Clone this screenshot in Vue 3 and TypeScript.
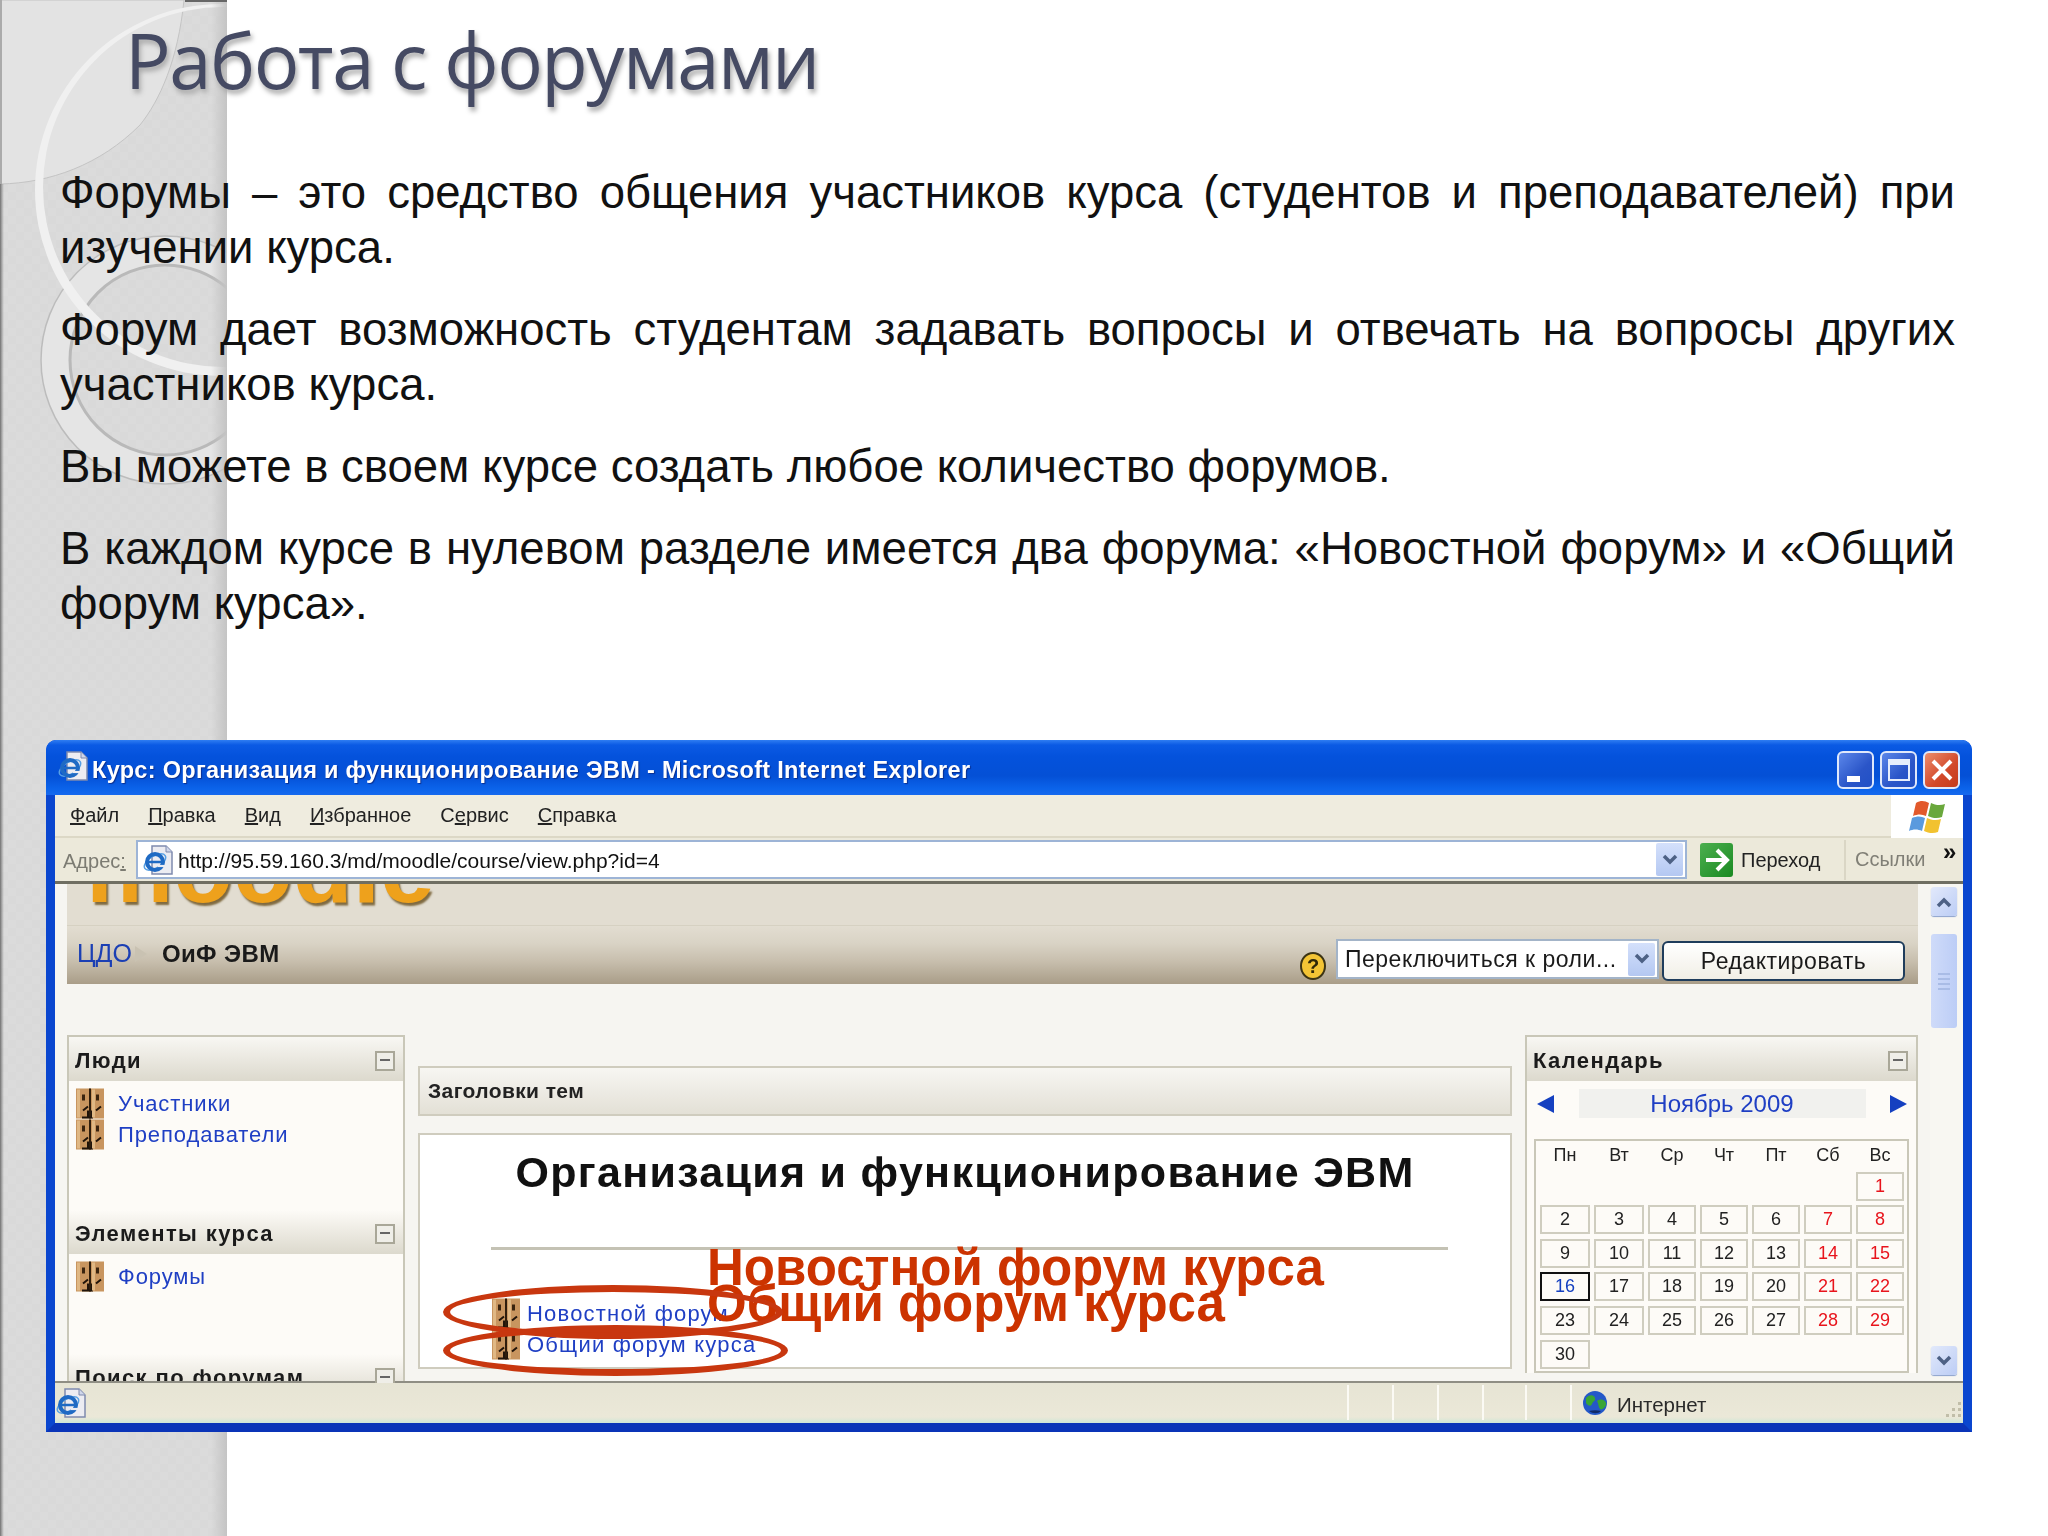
<script setup lang="ts">
const paragraphs = [
  "Форумы – это средство общения участников курса (студентов и преподавателей) при изучении курса.",
  "Форум дает возможность студентам задавать вопросы и отвечать на вопросы других участников курса.",
  "Вы можете в своем курсе создать любое количество форумов.",
  "В каждом курсе в нулевом разделе имеется два форума: «Новостной форум» и «Общий форум курса».",
];

const menu = [
  { pre: "", key: "Ф", post: "айл" },
  { pre: "", key: "П", post: "равка" },
  { pre: "", key: "В", post: "ид" },
  { pre: "", key: "И", post: "збранное" },
  { pre: "С", key: "е", post: "рвис" },
  { pre: "", key: "С", post: "правка" },
];

const weekdays = ["Пн", "Вт", "Ср", "Чт", "Пт", "Сб", "Вс"];
const blanks = 6;
const days = Array.from({ length: 30 }, (_, i) => i + 1);
const isWeekend = (day: number) => {
  const col = (day + blanks - 1) % 7;
  return col >= 5;
};
</script>

<template>
  <div class="slide">
    <svg class="band" width="227" height="1536" viewBox="0 0 227 1536">
      <defs>
        <linearGradient id="edge" x1="0" y1="0" x2="1" y2="0">
          <stop offset="0" stop-color="#6f6f6f" />
          <stop offset="1" stop-color="#8c8c8c" stop-opacity="0" />
        </linearGradient>
        <linearGradient id="edgeRight" x1="0" y1="0" x2="1" y2="0">
          <stop offset="0" stop-color="#c4c4c4" stop-opacity="0" />
          <stop offset="1" stop-color="#c4c4c4" />
        </linearGradient>
        <pattern id="weave" width="16" height="16" patternUnits="userSpaceOnUse">
          <rect width="8" height="8" fill="#e0e0e0" />
          <rect x="8" y="8" width="8" height="8" fill="#e0e0e0" />
        </pattern>
      </defs>
      <rect width="227" height="1536" fill="#d9d9d9" />
      <rect width="227" height="1536" fill="url(#weave)" opacity="0.25" />
      <path d="M0 0H184C178 60 160 100 140 125 100 165 50 183 0 184z" fill="#e3e3e3" stroke="#c4c4c4" stroke-width="1" />
      <rect y="0" width="2" height="184" fill="#ababab" />
      <circle cx="165" cy="360" r="110" fill="none" stroke="#e5e5e5" stroke-width="29" />
      <circle cx="165" cy="360" r="124" fill="none" stroke="#bcbcbc" stroke-width="1.5" />
      <circle cx="165" cy="360" r="95" fill="none" stroke="#b9b9b9" stroke-width="3" />
      <path
        d="M35 190a186 186 0 1 0 372 0a186 186 0 1 0-372 0zM43 187a180 180 0 1 0 360 0a180 180 0 1 0-360 0z"
        fill="#f0f0f0"
        fill-rule="evenodd"
      />
      <rect width="4" height="1536" y="184" fill="url(#edge)" />
      <rect x="211" width="16" height="1536" fill="url(#edgeRight)" />
      <rect x="185" width="42" height="2" fill="#666" />
      <symbol id="door" viewBox="0 0 28 30">
        <rect width="28" height="30" fill="#c8955f" />
        <rect x="13" width="2" height="30" fill="#2e1d0c" />
        <rect x="6" y="6" width="3" height="6" fill="#3a240f" />
        <rect x="20" y="6" width="3" height="6" fill="#3a240f" />
        <path d="M12 18 7 22M12 22v7H6M25 18l-5 4M16 22v7h-3" fill="none" stroke="#20140a" stroke-width="2" />
        <rect x="1" y="1" width="3" height="28" fill="#e0b884" />
        <rect x="16" y="1" width="3" height="28" fill="#e0b884" />
      </symbol>
      <symbol id="ie" viewBox="0 0 30 30">
        <path d="M9 1h14l6 6v22H9z" fill="#ececf2" stroke="#7f8aae" stroke-width="1.5" />
        <path d="M23 1v6h6" fill="#cfd6ea" stroke="#7f8aae" />
        <ellipse cx="12" cy="17" rx="12" ry="6" transform="rotate(-32 12 17)" fill="none" stroke="#58a0e4" stroke-width="1.5" />
        <circle cx="12" cy="17" r="8" fill="none" stroke="#1f6ac4" stroke-width="4" />
        <path d="M5 17h14" stroke="#1f6ac4" stroke-width="2.5" />
        <path d="M15 21h7" stroke="#ececf2" stroke-width="2.2" />
      </symbol>
    </svg>

    <div class="text">
      <h1 class="title">Работа с форумами</h1>
      <p v-for="p in paragraphs" :key="p" class="para">{{ p }}</p>
    </div>

    <div class="window">
      <div class="titlebar">
        <svg class="title-icon" width="30" height="30"><use href="#ie" /></svg>
        <span class="title-text">Курс: Организация и функционирование ЭВМ - Microsoft Internet Explorer</span>
        <div class="controls">
          <div class="ctl"><span class="min"></span></div>
          <div class="ctl"><span class="max"></span></div>
          <div class="ctl close">
            <svg width="24" height="24" viewBox="0 0 24 24"><path d="M3 3l18 18M21 3 3 21" stroke="#fff" stroke-width="4" /></svg>
          </div>
        </div>
      </div>

      <div class="menubar">
        <div class="menu-items">
          <span v-for="m in menu" :key="m.post">{{ m.pre }}<u>{{ m.key }}</u>{{ m.post }}</span>
        </div>
        <div class="flag">
          <svg width="38" height="34" viewBox="0 0 38 34">
            <path d="M8 3c5-3 9-2 13 0l-3 13c-4-2-8-2-13 0z" fill="#e2592b" />
            <path d="M23 3c4 2 9 3 14 1l-3 13c-5 2-10 1-14-1z" fill="#6aa83c" />
            <path d="M4 18c5-2 9-2 13 0l-3 13c-4-2-9-2-13 0z" fill="#5a9ade" />
            <path d="M19 18c4 2 9 3 14 1l-3 13c-5 2-10 1-14-1z" fill="#f2c230" />
          </svg>
        </div>
      </div>

      <div class="addressbar">
        <span class="addr-label">Адрес<u>:</u></span>
        <div class="addr-box">
          <svg width="30" height="30"><use href="#ie" /></svg>
          <span class="addr-url">http://95.59.160.3/md/moodle/course/view.php?id=4</span>
          <span class="combo-btn">
            <svg width="16" height="12" viewBox="0 0 16 12"><path d="M2 2l6 6 6-6" fill="none" stroke="#4d6185" stroke-width="3.5" /></svg>
          </span>
        </div>
        <span class="go-icon">
          <svg width="26" height="26" viewBox="0 0 26 26"><path d="M2 13h20M13 3l10 10-10 10" fill="none" stroke="#fff" stroke-width="4" /></svg>
        </span>
        <span class="go-text">Переход</span>
        <span class="links">Ссылки</span>
        <span class="more">»</span>
      </div>

      <div class="viewport">
        <div class="page">
          <div class="logo-strip"><span class="logo">moodle</span></div>
          <div class="navbar">
            <span class="crumb">ЦДО</span>
            <span class="crumb-arrow"></span>
            <span class="course">ОиФ ЭВМ</span>
            <div class="nav-right">
              <span class="help">?</span>
              <div class="role-select">
                <span>Переключиться к роли...</span>
                <span class="combo-btn">
                  <svg width="16" height="12" viewBox="0 0 16 12"><path d="M2 2l6 6 6-6" fill="none" stroke="#4d6185" stroke-width="3.5" /></svg>
                </span>
              </div>
              <div class="edit-btn">Редактировать</div>
            </div>
          </div>

          <div class="columns">
            <div class="col-left">
              <div class="block-head"><span>Люди</span><i class="toggle"></i></div>
              <div class="block-body people">
                <div class="row"><svg width="28" height="31"><use href="#door" /></svg><a>Участники</a></div>
                <div class="row"><svg width="28" height="31"><use href="#door" /></svg><a>Преподаватели</a></div>
              </div>
              <div class="block-head fade"><span>Элементы курса</span><i class="toggle"></i></div>
              <div class="block-body items">
                <div class="row"><svg width="28" height="31"><use href="#door" /></svg><a>Форумы</a></div>
              </div>
              <div class="block-head fade"><span>Поиск по форумам</span><i class="toggle"></i></div>
            </div>

            <div class="col-mid">
              <div class="topics-head">Заголовки тем</div>
              <div class="topics-box">
                <h2 class="course-title">Организация и функционирование ЭВМ</h2>
                <div class="rule"></div>
                <div class="forum-row"><svg width="28" height="31"><use href="#door" /></svg><a>Новостной форум</a></div>
                <div class="forum-row"><svg width="28" height="31"><use href="#door" /></svg><a>Общий форум курса</a></div>
              </div>
            </div>

            <div class="col-right">
              <div class="block-head"><span class="cal-title">Календарь</span><i class="toggle"></i></div>
              <div class="cal-body">
                <div class="month-row">
                  <span class="arrow left"></span>
                  <span class="month">Ноябрь 2009</span>
                  <span class="arrow right"></span>
                </div>
                <div class="cal-grid">
                  <span v-for="w in weekdays" :key="w" class="wd">{{ w }}</span>
                  <span v-for="n in blanks" :key="'b' + n" class="blank"></span>
                  <span
                    v-for="d in days"
                    :key="d"
                    class="day"
                    :class="{ weekend: isWeekend(d), today: d === 16 }"
                  >{{ d }}</span>
                </div>
              </div>
            </div>
          </div>
        </div>

        <div class="scrollbar">
          <span class="sb-btn">
            <svg width="16" height="12" viewBox="0 0 16 12"><path d="M2 10l6-6 6 6" fill="none" stroke="#4d6185" stroke-width="3.5" /></svg>
          </span>
          <div class="sb-thumb"><i></i><i></i><i></i><i></i></div>
          <span class="sb-btn bottom">
            <svg width="16" height="12" viewBox="0 0 16 12"><path d="M2 2l6 6 6-6" fill="none" stroke="#4d6185" stroke-width="3.5" /></svg>
          </span>
        </div>
      </div>

      <div class="statusbar">
        <svg class="status-ie" width="30" height="30"><use href="#ie" /></svg>
        <div class="status-fill"></div>
        <div class="cell"></div>
        <div class="cell"></div>
        <div class="cell"></div>
        <div class="cell narrow"></div>
        <div class="cell"></div>
        <div class="cell zone">
          <svg width="24" height="24" viewBox="0 0 24 24">
            <circle cx="12" cy="12" r="12" fill="#2458c8" />
            <path d="M3 7c4-4 8-3 9 0s-2 3-3 6-4 2-6-1zM14 10c4-3 8-1 9 2s-4 8-6 6-1-5-3-8z" fill="#39a534" />
            <path d="M6 20c4 3 9 3 12 0-4-1-8-1-12 0z" fill="#102a68" />
          </svg>
          <span class="zone-text">Интернет</span>
          <svg class="grip" width="18" height="18" viewBox="0 0 18 18">
            <path d="M13 1h3v3h-3zM7 7h3v3H7zM13 7h3v3h-3zM1 13h3v3H1zM7 13h3v3H7zM13 13h3v3h-3z" fill="#c1bea9" />
          </svg>
        </div>
      </div>
    </div>

    <div class="callout first">Новостной форум курса</div>
    <div class="callout second">Общий форум курса</div>
    <div class="ring ring-a"></div>
    <div class="ring ring-b"></div>
  </div>
</template>

<style>
html,
body {
  margin: 0;
  background: #fff;
}
</style>

<style scoped>
.slide {
  position: relative;
  width: 2048px;
  height: 1536px;
  overflow: hidden;
  background: #fff;
  font-family: "Liberation Sans", sans-serif;
}
.band {
  position: absolute;
  left: 0;
  top: 0;
}
.text {
  position: relative;
  padding: 0 93px 0 60px;
}
.title {
  margin: 0 0 0 65px;
  height: 165px;
  box-sizing: border-box;
  padding-top: 10px;
  font-family: "Open Sans", sans-serif;
  font-weight: 400;
  font-size: 76px;
  line-height: 100px;
  letter-spacing: -1.5px;
  color: #454a63;
  text-shadow: 2px 4px 5px #a9a9a9;
}
.para {
  margin: 0 0 27px;
  font-size: 45.5px;
  line-height: 55px;
  text-align: justify;
  color: #111;
}

.window {
  position: relative;
  margin: 109px 76px 0 46px;
  height: 692px;
  box-sizing: border-box;
  display: flex;
  flex-direction: column;
  background: #0a4fd6;
  border: solid #0a46cf;
  border-width: 0 9px 9px;
  border-bottom-color: #0a34b8;
  border-radius: 10px 10px 0 0;
  filter: blur(0.5px);
  font-size: 21px;
  color: #222;
}
.titlebar {
  height: 55px;
  margin: 0 -9px;
  padding: 0 12px;
  display: flex;
  align-items: center;
  border-radius: 10px 10px 0 0;
  background: linear-gradient(#2f7df2 0, #0b5ae4 5px, #0452dc 30%, #0450d6 65%, #0b63ea 88%, #1669ee 100%);
}
.title-icon {
  margin: 0 4px 4px 0;
}
.title-text {
  margin-top: 5px;
  font-weight: 700;
  font-size: 23.5px;
  color: #fff;
  text-shadow: 1px 1px 1px #0a2f90;
  letter-spacing: 0.3px;
  white-space: nowrap;
}
.controls {
  margin-left: auto;
  margin-right: 0;
  margin-top: 4px;
  display: flex;
  gap: 6px;
}
.ctl {
  width: 37px;
  height: 38px;
  box-sizing: border-box;
  border: 2px solid #dfe8fb;
  border-radius: 6px;
  background: linear-gradient(135deg, #5b87ea, #2a55c8 60%, #2150c6);
  position: relative;
  display: flex;
  align-items: center;
  justify-content: center;
}
.ctl.close {
  background: linear-gradient(135deg, #ec8d6c, #d2482a 60%, #c43c1c);
}
.min {
  position: absolute;
  left: 8px;
  bottom: 5px;
  width: 13px;
  height: 6px;
  background: #fff;
}
.max {
  width: 22px;
  height: 22px;
  box-sizing: border-box;
  border: 2px solid #e6eefc;
  border-top-width: 6px;
}

.menubar {
  height: 43px;
  display: flex;
  background: #efecdf;
}
.menu-items {
  flex: 1;
  display: flex;
  align-items: center;
  gap: 29px;
  padding-left: 15px;
  font-size: 20px;
  border-bottom: 2px solid #dcd8c6;
}
.flag {
  width: 72px;
  display: flex;
  align-items: center;
  justify-content: center;
  background: #fff;
}

.addressbar {
  height: 46px;
  box-sizing: border-box;
  display: flex;
  align-items: center;
  background: #ece9da;
  border-bottom: 3px solid #6f6e62;
  white-space: nowrap;
}
.addr-label {
  margin: 3px 0 0 8px;
  width: 73px;
  font-size: 20px;
  color: #7c7b72;
}
.addr-box {
  flex: 1;
  height: 39px;
  box-sizing: border-box;
  display: flex;
  align-items: center;
  padding: 0 2px 0 5px;
  background: #fff;
  border: 2px solid #9db4d6;
}
.addr-url {
  margin: 3px 0 0 5px;
  color: #111;
}
.combo-btn {
  margin-left: auto;
  width: 27px;
  height: 33px;
  display: flex;
  align-items: center;
  justify-content: center;
  background: linear-gradient(#d4e0fb, #b4c8f2);
  border-radius: 2px;
}
.go-icon {
  margin-left: 13px;
  width: 33px;
  height: 34px;
  display: flex;
  align-items: center;
  justify-content: center;
  background: linear-gradient(135deg, #4caf4f, #1a8a22);
  border-radius: 3px;
}
.go-text {
  margin-left: 8px;
  width: 81px;
  padding-right: 22px;
  border-right: 2px solid #dad6c5;
  line-height: 40px;
  font-size: 20px;
}
.links {
  margin-left: 9px;
  width: 71px;
  font-size: 20px;
  color: #807f76;
}
.more {
  margin-left: 17px;
  width: 20px;
  align-self: flex-start;
  font-weight: 700;
  font-size: 24px;
  line-height: 28px;
  color: #111;
}

.viewport {
  flex: 1;
  min-height: 0;
  display: flex;
  background: #f6f5f1;
}
.page {
  flex: 1;
  min-width: 0;
  overflow: hidden;
  padding: 0 12px;
}
.logo-strip {
  height: 42px;
  overflow: hidden;
  background: #e2ddd1;
  border-bottom: 1px solid #d6d1c2;
  box-sizing: border-box;
}
.logo {
  display: block;
  margin: -65px 0 0 19px;
  font-weight: 700;
  font-size: 98px;
  line-height: 98px;
  color: #eea11c;
  text-shadow: 2px 3px 2px #7f6a40;
}
.navbar {
  height: 58px;
  display: flex;
  align-items: center;
  padding-left: 10px;
  background: linear-gradient(#e2ddd1 0, #d9d3c5 30%, #c8bfae 60%, #a99d88 100%);
}
.crumb {
  margin-bottom: 3px;
  font-size: 25px;
  color: #1b3fb4;
}
.crumb-arrow {
  margin: 0 0 3px 3px;
  width: 0;
  height: 0;
  border: 8px solid transparent;
  border-left: 12px solid #c9c2b2;
}
.course {
  margin: 0 0 3px 7px;
  font-size: 24px;
  font-weight: 700;
  letter-spacing: 0.4px;
  color: #1a1a1a;
}
.nav-right {
  margin-left: auto;
  margin-right: 13px;
  display: flex;
  align-items: center;
}
.help {
  width: 26px;
  height: 28px;
  margin: 22px 10px 0 0;
  display: flex;
  align-items: center;
  justify-content: center;
  box-sizing: border-box;
  border: 2px solid #3c3414;
  border-radius: 50%;
  background: #f3c435;
  font-size: 20px;
  font-weight: 700;
  color: #2f2808;
}
.role-select {
  width: 323px;
  height: 40px;
  box-sizing: border-box;
  display: flex;
  align-items: center;
  padding: 0 2px 0 7px;
  margin-top: 8px;
  background: #fff;
  border: 2px solid #a3b4c8;
  font-size: 23px;
  letter-spacing: 0.5px;
  color: #1a1a1a;
  white-space: nowrap;
}
.edit-btn {
  width: 243px;
  height: 40px;
  margin: 12px 0 0 3px;
  box-sizing: border-box;
  display: flex;
  align-items: center;
  justify-content: center;
  background: linear-gradient(#fff, #f1efe6);
  border: 2px solid #1f3d5c;
  border-radius: 6px;
  font-size: 23px;
  letter-spacing: 0.5px;
  color: #1a1a1a;
}

.columns {
  display: flex;
  gap: 13px;
  margin-top: 51px;
  align-items: flex-start;
}
.col-left {
  width: 338px;
  flex: none;
  box-sizing: border-box;
  border: solid #c9c7b8;
  border-width: 2px 2px 0;
  background: #fdfbf7;
}
.col-mid {
  flex: 1;
  min-width: 0;
  padding-top: 31px;
}
.col-right {
  width: 393px;
  flex: none;
  box-sizing: border-box;
  border: solid #c9c7b8;
  border-width: 2px 2px 0;
  background: #fdfbf7;
}
.block-head {
  height: 44px;
  box-sizing: border-box;
  display: flex;
  align-items: center;
  justify-content: space-between;
  padding: 4px 8px 0 6px;
  background: linear-gradient(#f8f7f3, #dcd9cd);
  font-size: 22px;
  font-weight: 700;
  letter-spacing: 1.4px;
  color: #1b1b1b;
}
.block-head.fade {
  background: linear-gradient(#fdfbf7, #dcd9cd);
}
.toggle {
  position: relative;
  width: 20px;
  height: 20px;
  box-sizing: border-box;
  border: 2px solid #a9a798;
  background: #efeee8;
}
.toggle::after {
  content: "";
  position: absolute;
  left: 3px;
  right: 3px;
  top: 6px;
  height: 2px;
  background: #666;
}
.block-body {
  padding: 7px 0 0 7px;
  box-sizing: border-box;
}
.people {
  height: 129px;
}
.items {
  height: 100px;
}
.row {
  display: flex;
  align-items: center;
  height: 31px;
  gap: 14px;
}
.row a {
  color: #1f3fc4;
  font-size: 22px;
  letter-spacing: 0.9px;
}
.forum-row a {
  color: #1f3fc4;
  font-size: 22px;
  letter-spacing: 1.2px;
}

.topics-head {
  height: 50px;
  box-sizing: border-box;
  display: flex;
  align-items: center;
  padding-left: 8px;
  border: 2px solid #cfccbe;
  background: linear-gradient(#f7f6f2, #e3e0d6);
  font-size: 21px;
  font-weight: 700;
  letter-spacing: 0.4px;
  color: #222;
}
.topics-box {
  margin-top: 17px;
  height: 236px;
  box-sizing: border-box;
  padding-top: 12px;
  background: #fff;
  border: 2px solid #cfccbe;
}
.course-title {
  margin: 0;
  text-align: center;
  font-size: 43px;
  line-height: 50px;
  font-weight: 700;
  letter-spacing: 1.3px;
  color: #111;
}
.rule {
  margin: 50px 62px 0 71px;
  height: 3px;
  background: #c4c2b4;
}
.forum-row {
  display: flex;
  align-items: center;
  height: 31px;
  gap: 7px;
  margin-left: 72px;
}
.rule + .forum-row {
  margin-top: 48px;
}

.cal-body {
  padding: 8px 7px 0;
}
.month-row {
  display: flex;
  align-items: center;
  justify-content: space-between;
  height: 29px;
  padding: 0 2px 0 3px;
}
.arrow {
  width: 0;
  height: 0;
  border: 9px solid transparent;
}
.arrow.left {
  border-left: 0;
  border-right: 17px solid #1540c0;
}
.arrow.right {
  border-right: 0;
  border-left: 17px solid #1540c0;
}
.month {
  width: 287px;
  text-align: center;
  background: #f1f1ee;
  font-size: 24px;
  line-height: 29px;
  color: #1f3fc4;
}
.cal-grid {
  margin-top: 21px;
  height: 234px;
  box-sizing: border-box;
  display: grid;
  grid-template-columns: 50px 50px 48px 48px 48px 48px 48px;
  grid-template-rows: 24px repeat(6, 29px);
  gap: 4.6px 4px;
  align-content: start;
  padding: 2px 4px 0;
  border: 2px solid #c9c7b8;
  font-size: 18px;
}
.wd {
  display: flex;
  align-items: center;
  justify-content: center;
  color: #222;
}
.day {
  display: flex;
  align-items: center;
  justify-content: center;
  box-sizing: border-box;
  border: 2px solid #cfcdbf;
  color: #222;
}
.day.weekend {
  color: #e8141c;
}
.day.today {
  border-color: #111;
  color: #1540c0;
}

.scrollbar {
  width: 33px;
  flex: none;
  display: flex;
  flex-direction: column;
  align-items: center;
  padding: 3px 5px 8px 0;
  box-sizing: border-box;
  background: #f8f7f2;
}
.sb-btn {
  width: 26px;
  height: 29px;
  display: flex;
  align-items: center;
  justify-content: center;
  background: linear-gradient(135deg, #e2e9fb, #bccdf5);
  border-radius: 3px;
  box-shadow: 0 1px 1px #8aa0cc;
}
.sb-btn.bottom {
  margin-top: auto;
}
.sb-thumb {
  margin-top: 18px;
  width: 26px;
  height: 94px;
  display: flex;
  flex-direction: column;
  align-items: center;
  justify-content: center;
  gap: 3px;
  background: linear-gradient(90deg, #cfdbf9, #bccdf6);
  border-radius: 3px;
}
.sb-thumb i {
  width: 12px;
  height: 2px;
  background: #a9bce6;
}

.statusbar {
  height: 40px;
  flex: none;
  display: flex;
  align-items: stretch;
  background: linear-gradient(#e6e4d4, #ebe8d8 85%, #cfe6d6);
  box-shadow: 0 -2px 0 #8f8e84;
}
.status-ie {
  margin: 5px 0 0 1px;
}
.status-fill {
  flex: 1;
}
.cell {
  width: 43px;
  margin: 2px 0 3px;
  border-left: 2px solid #fbfaf4;
}
.cell.narrow {
  width: 41px;
}
.zone {
  width: 393px;
  flex: none;
  display: flex;
  align-items: center;
  gap: 10px;
  padding-left: 11px;
  box-sizing: border-box;
  font-size: 20.5px;
  color: #2a2a2a;
}
.zone-text {
  margin-top: 4px;
}
.grip {
  margin: 14px 0 0 auto;
}

.callout {
  position: absolute;
  left: 707px;
  font-weight: 700;
  font-size: 51px;
  line-height: 56px;
  color: #cc3300;
  white-space: nowrap;
}
.callout.first {
  top: 1240px;
}
.callout.second {
  top: 1276px;
}
.ring {
  position: absolute;
  left: 443px;
  box-sizing: border-box;
  border: 7px solid #c8370f;
  border-radius: 50%;
}
.ring-a {
  top: 1285px;
  width: 340px;
  height: 54px;
}
.ring-b {
  top: 1325px;
  width: 345px;
  height: 51px;
}
</style>
